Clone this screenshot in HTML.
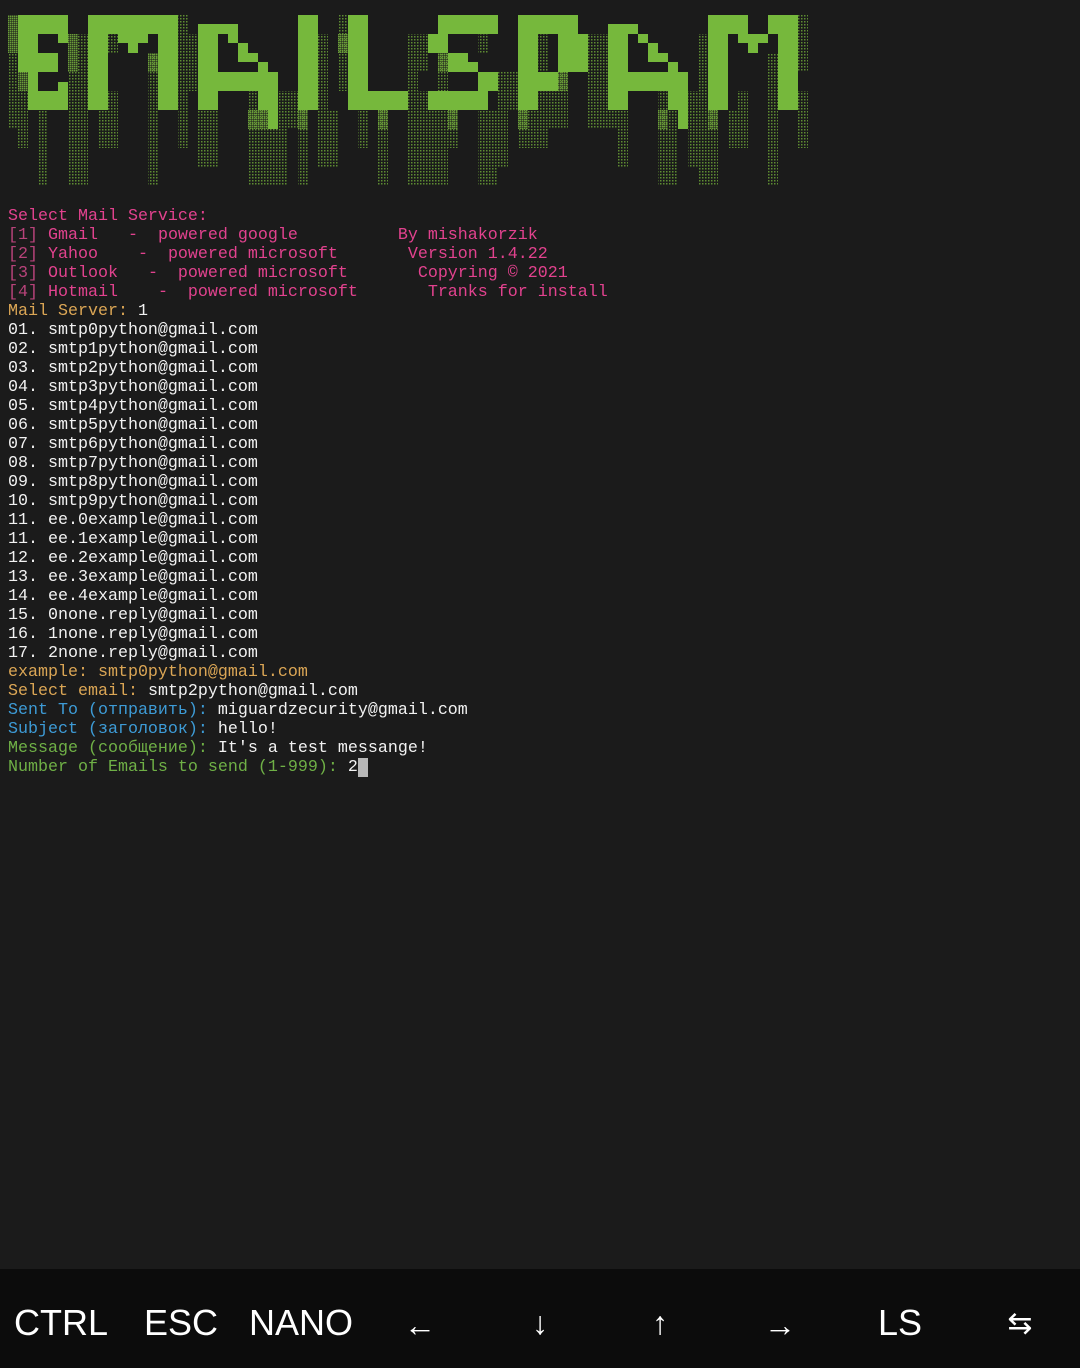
<!DOCTYPE html>
<html><head><meta charset="utf-8">
<style>
html,body{margin:0;padding:0;background:#1b1b1b;}
body{width:1080px;height:1368px;position:relative;overflow:hidden;}
pre{position:absolute;left:8px;top:207px;margin:0;font-family:"Liberation Mono",monospace;font-size:16.67px;line-height:19px;color:#f2f2f2;white-space:pre;}
.p{color:#e2428e}.pd{color:#b8437a}.o{color:#dba655}.b{color:#3d9bd6}.g{color:#6fb046}
.cur{background:#b8b8b8;color:#1b1b1b}
#bar{position:absolute;left:0;top:1269px;width:1080px;height:99px;background:#0c0c0c;}
#bar span{position:absolute;top:0;line-height:1;font-family:"Liberation Sans",sans-serif;color:#fff;font-size:36px;transform:translateX(-50%);}
</style></head><body>
<svg width="820" height="200" style="position:absolute;left:0;top:0">
<defs>
<pattern id="d" width="3" height="3" patternUnits="userSpaceOnUse"><rect width="1.5" height="1.5" fill="#5e8c32"/></pattern>
<pattern id="m" width="2" height="2" patternUnits="userSpaceOnUse"><rect width="1.5" height="1.5" fill="#6a9c38"/></pattern>
</defs>
<g fill="url(#d)">
<rect x="8" y="53" width="10" height="76"/><rect x="18" y="91" width="10" height="57"/>
<rect x="38" y="110" width="10" height="76"/><rect x="68" y="72" width="20" height="114"/>
<rect x="78" y="34" width="10" height="76"/><rect x="98" y="91" width="20" height="57"/>
<rect x="108" y="34" width="10" height="19"/><rect x="148" y="53" width="10" height="133"/>
<rect x="178" y="15" width="10" height="133"/><rect x="188" y="34" width="10" height="57"/>
<rect x="198" y="91" width="20" height="76"/><rect x="248" y="91" width="30" height="95"/>
<rect x="278" y="91" width="10" height="95"/><rect x="288" y="91" width="10" height="38"/>
<rect x="298" y="110" width="10" height="76"/><rect x="318" y="34" width="10" height="133"/>
<rect x="328" y="110" width="10" height="57"/><rect x="338" y="15" width="10" height="76"/>
<rect x="358" y="110" width="10" height="38"/><rect x="378" y="110" width="10" height="76"/>
<rect x="408" y="34" width="10" height="76"/><rect x="408" y="91" width="40" height="95"/>
<rect x="418" y="34" width="10" height="38"/><rect x="438" y="53" width="10" height="95"/>
<rect x="448" y="110" width="10" height="38"/><rect x="478" y="34" width="10" height="19"/>
<rect x="478" y="110" width="20" height="76"/><rect x="498" y="72" width="10" height="95"/>
<rect x="508" y="72" width="10" height="38"/><rect x="518" y="110" width="20" height="38"/>
<rect x="538" y="15" width="10" height="133"/><rect x="548" y="72" width="20" height="57"/>
<rect x="588" y="34" width="20" height="95"/><rect x="608" y="91" width="10" height="38"/>
<rect x="618" y="110" width="10" height="57"/><rect x="658" y="91" width="20" height="95"/>
<rect x="688" y="91" width="10" height="76"/><rect x="698" y="34" width="20" height="152"/>
<rect x="728" y="110" width="10" height="38"/><rect x="738" y="91" width="10" height="57"/>
<rect x="768" y="53" width="10" height="133"/><rect x="798" y="15" width="10" height="57"/>
<rect x="798" y="91" width="10" height="57"/>
</g>
<g fill="url(#m)">
<rect x="8" y="15" width="10" height="38"/><rect x="18" y="72" width="10" height="19"/>
<rect x="68" y="34" width="10" height="38"/><rect x="148" y="53" width="10" height="19"/>
<rect x="208" y="91" width="10" height="19"/><rect x="248" y="110" width="20" height="19"/>
<rect x="298" y="110" width="10" height="19"/><rect x="338" y="34" width="10" height="19"/>
<rect x="378" y="110" width="10" height="19"/><rect x="438" y="53" width="10" height="19"/>
<rect x="448" y="110" width="10" height="19"/><rect x="518" y="110" width="10" height="19"/>
<rect x="558" y="72" width="10" height="19"/><rect x="608" y="91" width="10" height="19"/>
<rect x="658" y="110" width="10" height="19"/><rect x="708" y="110" width="10" height="19"/>
</g>
<g fill="#76b83c">
<rect x="18" y="15" width="50" height="19"/><rect x="18" y="15" width="10" height="57"/>
<rect x="28" y="15" width="10" height="95"/><rect x="58" y="15" width="10" height="28"/>
<rect x="28" y="53" width="30" height="19"/><rect x="58" y="82" width="10" height="9"/>
<rect x="28" y="91" width="40" height="19"/>
<rect x="88" y="15" width="20" height="95"/><rect x="88" y="15" width="90" height="19"/>
<rect x="118" y="34" width="30" height="9"/><rect x="128" y="34" width="10" height="19"/>
<rect x="158" y="15" width="20" height="95"/>
<rect x="198" y="24" width="20" height="86"/><rect x="198" y="24" width="30" height="10"/>
<rect x="218" y="24" width="20" height="10"/><rect x="228" y="34" width="10" height="9"/>
<rect x="238" y="43" width="10" height="10"/><rect x="238" y="53" width="20" height="9"/>
<rect x="258" y="62" width="10" height="10"/><rect x="218" y="72" width="50" height="19"/>
<rect x="258" y="72" width="20" height="38"/><rect x="268" y="72" width="10" height="57"/>
<rect x="298" y="15" width="20" height="95"/>
<rect x="348" y="15" width="20" height="95"/><rect x="348" y="91" width="60" height="19"/>
<rect x="438" y="15" width="60" height="19"/><rect x="428" y="34" width="20" height="19"/>
<rect x="448" y="53" width="20" height="19"/><rect x="468" y="62" width="10" height="10"/>
<rect x="478" y="72" width="20" height="19"/><rect x="428" y="91" width="60" height="19"/>
<rect x="400" y="91" width="8" height="19"/>
<rect x="518" y="15" width="20" height="95"/><rect x="518" y="15" width="60" height="19"/>
<rect x="558" y="34" width="30" height="38"/><rect x="538" y="72" width="20" height="19"/>
<rect x="608" y="24" width="20" height="86"/><rect x="608" y="24" width="30" height="10"/>
<rect x="638" y="34" width="10" height="9"/><rect x="648" y="43" width="10" height="10"/>
<rect x="648" y="53" width="20" height="9"/><rect x="668" y="62" width="10" height="10"/>
<rect x="628" y="72" width="50" height="19"/><rect x="678" y="72" width="10" height="57"/>
<rect x="668" y="72" width="10" height="38"/>
<rect x="708" y="15" width="20" height="95"/><rect x="708" y="15" width="40" height="19"/>
<rect x="738" y="34" width="30" height="9"/><rect x="748" y="34" width="10" height="19"/>
<rect x="768" y="15" width="30" height="19"/><rect x="778" y="15" width="20" height="95"/>
</g>
</svg>
<pre><span class="p">Select Mail Service:</span>
<span class="pd">[1]</span><span class="p"> Gmail   -  powered google          By mishakorzik</span>
<span class="pd">[2]</span><span class="p"> Yahoo    -  powered microsoft       Version 1.4.22</span>
<span class="pd">[3]</span><span class="p"> Outlook   -  powered microsoft       Copyring © 2021</span>
<span class="pd">[4]</span><span class="p"> Hotmail    -  powered microsoft       Tranks for install</span>
<span class="o">Mail Server:</span> 1
01. smtp0python@gmail.com
02. smtp1python@gmail.com
03. smtp2python@gmail.com
04. smtp3python@gmail.com
05. smtp4python@gmail.com
06. smtp5python@gmail.com
07. smtp6python@gmail.com
08. smtp7python@gmail.com
09. smtp8python@gmail.com
10. smtp9python@gmail.com
11. ee.0example@gmail.com
11. ee.1example@gmail.com
12. ee.2example@gmail.com
13. ee.3example@gmail.com
14. ee.4example@gmail.com
15. 0none.reply@gmail.com
16. 1none.reply@gmail.com
17. 2none.reply@gmail.com
<span class="o">example: smtp0python@gmail.com</span>
<span class="o">Select email:</span> smtp2python@gmail.com
<span class="b">Sent To (отправить):</span> miguardzecurity@gmail.com
<span class="b">Subject (заголовок):</span> hello!
<span class="g">Message (сообщение):</span> It's a test messange!
<span class="g">Number of Emails to send (1-999):</span> 2<span class="cur"> </span></pre>
<div id="bar">
<span style="left:61px;top:36px">CTRL</span>
<span style="left:181px;top:36px">ESC</span>
<span style="left:301px;top:36px">NANO</span>
<span style="left:420px;top:40px;font-size:32px">←</span>
<span style="left:540px;top:38px;font-size:32px">↓</span>
<span style="left:660px;top:38px;font-size:32px">↑</span>
<span style="left:780px;top:40px;font-size:32px">→</span>
<span style="left:900px;top:36px">LS</span>
<span style="left:1020px;top:40px;font-size:30px">⇆</span>
</div>
</body></html>
